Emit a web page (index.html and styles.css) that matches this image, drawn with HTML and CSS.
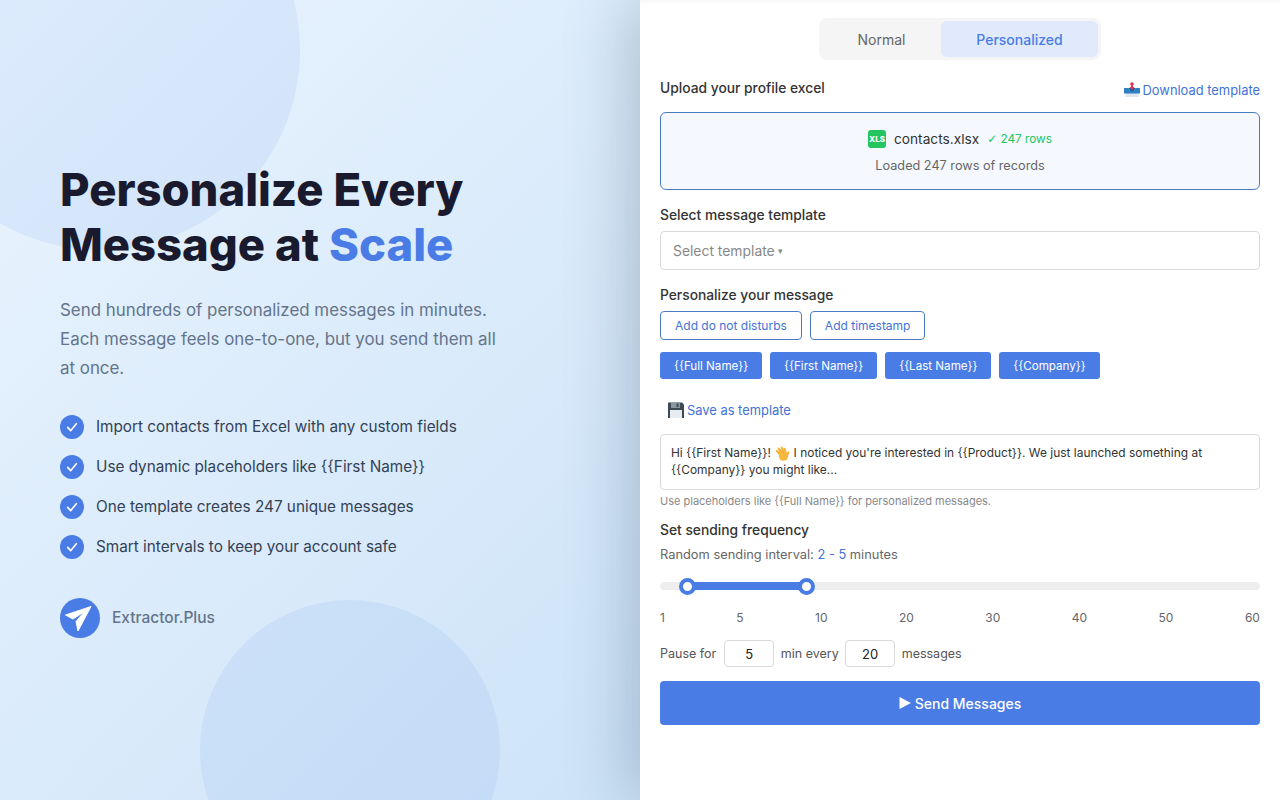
FILE: index.html
```html
<!DOCTYPE html>
<html lang="en">
<head>
<meta charset="utf-8">
<title>Extractor.Plus</title>
<link rel="stylesheet" href="styles.css">
</head>
<body>
<main class="layout">
  <section class="hero">
    <span class="blob blob-top"></span>
    <span class="blob blob-bottom"></span>
    <div class="hero-body">
      <h1 class="hero-title">Personalize Every<br>Message at <span class="accent">Scale</span></h1>
      <p class="hero-text">Send hundreds of personalized messages in minutes. Each message feels one-to-one, but you send them all at once.</p>
      <ul class="features">
        <li class="feature"><span class="tick"><svg viewBox="0 0 24 24" width="16" height="16"><path d="M5.500 12.500l4.500 5 8.500-10.500" fill="none" stroke="#fff" stroke-width="2.500" stroke-linecap="round" stroke-linejoin="round"/></svg></span>Import contacts from Excel with any custom fields</li>
        <li class="feature"><span class="tick"><svg viewBox="0 0 24 24" width="16" height="16"><path d="M5.500 12.500l4.500 5 8.500-10.500" fill="none" stroke="#fff" stroke-width="2.500" stroke-linecap="round" stroke-linejoin="round"/></svg></span>Use dynamic placeholders like {{First Name}}</li>
        <li class="feature"><span class="tick"><svg viewBox="0 0 24 24" width="16" height="16"><path d="M5.500 12.500l4.500 5 8.500-10.500" fill="none" stroke="#fff" stroke-width="2.500" stroke-linecap="round" stroke-linejoin="round"/></svg></span>One template creates 247 unique messages</li>
        <li class="feature"><span class="tick"><svg viewBox="0 0 24 24" width="16" height="16"><path d="M5.500 12.500l4.500 5 8.500-10.500" fill="none" stroke="#fff" stroke-width="2.500" stroke-linecap="round" stroke-linejoin="round"/></svg></span>Smart intervals to keep your account safe</li>
      </ul>
      <div class="brand">
        <span class="brand-logo"><svg viewBox="0 0 40 40" width="40" height="40"><path d="M5.500 17L31 8.500 18 33 16 23.500 24.500 13.500 13 21z" fill="#fff" stroke="#fff" stroke-width="1" stroke-linejoin="round"/></svg></span>
        <span class="brand-name">Extractor.Plus</span>
      </div>
    </div>
  </section>

  <section class="panel">
    <div class="tabs-row">
      <div class="tabs">
        <span class="tab">Normal</span>
        <span class="tab tab-active">Personalized</span>
      </div>
    </div>

    <div class="upload-head">
      <span class="label">Upload your profile excel</span>
      <a class="link download"><svg class="emoji" viewBox="0 0 16 16" width="16" height="16"><path d="M1.500 11h13v4H1.500z" fill="#dfe6ec"/><path d="M0 6h4.500l1.500 3h4l1.500-3H16v5.500H0z" fill="#2f7fc4"/><path d="M4.500 6h7L10 9H6z" fill="#1f5f9a"/><circle cx="8" cy="2" r="1.800" fill="#e0344a"/><path d="M7 2.500h2V5h1.500L8 8 5.500 5H7z" fill="#e0344a"/></svg>Download template</a>
    </div>
    <div class="dropzone">
      <div class="file-line">
        <span class="xls">XLS</span>
        <span class="file-name">contacts.xlsx</span>
        <span class="file-rows"><span class="file-check">✓</span> 247 rows</span>
      </div>
      <div class="file-note">Loaded 247 rows of records</div>
    </div>

    <div class="label label-template">Select message template</div>
    <div class="select">Select template<span class="caret">▾</span></div>

    <div class="label label-personal">Personalize your message</div>
    <div class="btn-row btn-row-outline">
      <span class="btn-outline">Add do not disturbs</span>
      <span class="btn-outline">Add timestamp</span>
    </div>
    <div class="btn-row btn-row-fill">
      <span class="chip">{{Full Name}}</span>
      <span class="chip">{{First Name}}</span>
      <span class="chip">{{Last Name}}</span>
      <span class="chip">{{Company}}</span>
    </div>
    <a class="link save"><svg class="emoji" viewBox="0 0 16 16" width="16" height="16"><path d="M0 .500h14l2 2V16H0z" fill="#3e4a53"/><rect x="3" y=".500" width="9" height="5.500" fill="#8a98a4"/><rect x="8.500" y="1.500" width="2" height="3.500" fill="#3e4a53"/><rect x="2" y="8" width="12" height="8" fill="#e6ecf0"/></svg>Save as template</a>
    <div class="message">Hi {{First Name}}! <svg class="wave" viewBox="0 0 16 16" width="16" height="16"><ellipse cx="9.500" cy="10" rx="4.700" ry="4.800" fill="#f5b83d"/><path d="M7 9L2.800 5M7.500 7.500L4.800 2.800M9.500 7L7.800 1.800M11.500 7.500L10.800 3M12.500 10L14.500 6.500" fill="none" stroke="#f5b83d" stroke-width="2.300" stroke-linecap="round"/><path d="M5 8.500L2.800 5.500M7.500 6.500L5.500 3M9.500 6.500L8.300 2.500" fill="none" stroke="#e59a26" stroke-width=".5" stroke-linecap="round"/></svg> I noticed you're interested in {{Product}}. We just launched something at {{Company}} you might like...</div>
    <div class="hint">Use placeholders like {{Full Name}} for personalized messages.</div>

    <div class="label label-frequency">Set sending frequency</div>
    <div class="interval">Random sending interval: <span class="interval-value">2 - 5</span> minutes</div>
    <div class="slider">
      <div class="slider-fill"></div>
      <span class="thumb thumb-a"></span>
      <span class="thumb thumb-b"></span>
    </div>
    <div class="scale"><span>1</span><span>5</span><span>10</span><span>20</span><span>30</span><span>40</span><span>50</span><span>60</span></div>
    <div class="pause">
      <span class="pause-first">Pause for</span><span class="num">5</span><span>min every</span><span class="num">20</span><span>messages</span>
    </div>
    <div class="send"><svg viewBox="0 0 12 12" width="12" height="12"><path d="M.5 0L12 6 .5 12z" fill="#fff"/></svg>Send Messages</div>
  </section>
</main>
</body>
</html>
```
FILE: styles.css
```css
* { box-sizing: border-box; }
html, body { margin: 0; height: 100%; }
body { font-family: Inter, "Noto Sans", sans-serif; color: #333; overflow: hidden; background: #fff; }
.layout { display: flex; width: 1280px; height: 800px; overflow: hidden; }

.hero { position: relative; width: 640px; height: 800px; overflow: hidden; background: linear-gradient(135deg, #eaf4fe 0%, #cde3f8 100%); display: flex; align-items: center; padding: 0 60px; }
.blob { position: absolute; border-radius: 50%; }
.blob-top { width: 400px; height: 400px; left: -100px; top: -150px; background: rgba(74,130,230,.09); }
.blob-bottom { width: 300px; height: 300px; left: 200px; top: 600px; background: rgba(74,130,230,.09); }
.hero-body { position: relative; width: 100%; margin-top: -1px; }
.hero-title { margin: 0 0 24px; font-size: 45.400px; line-height: 55px; font-weight: 800; color: #1a1a2e; }
.accent { color: #4a7ce6; }
.hero-text { margin: 0 0 32px; width: 450px; font-size: 16.900px; line-height: 29px; color: #64748b; }
.features { list-style: none; margin: 0 0 39px; padding: 0; display: flex; flex-direction: column; gap: 16px; }
.feature { display: flex; align-items: center; gap: 12px; height: 24px; font-size: 15.300px; color: #334155; }
.tick { width: 24px; height: 24px; border-radius: 50%; background: #4a7ce6; display: flex; align-items: center; justify-content: center; flex: none; }
.brand { display: flex; align-items: center; gap: 12px; }
.brand-logo { width: 40px; height: 40px; border-radius: 50%; background: #4a7ce6; display: block; }
.brand-logo svg { display: block; }
.brand-name { font-size: 15.500px; font-weight: 500; color: #64748b; }

.panel { position: relative; width: 640px; height: 800px; background: #fff; padding: 18px 20px 0; box-shadow: -10px 0 60px rgba(30,60,90,.26), inset 0 6px 6px -6px rgba(0,0,0,.08); }
.tabs-row { display: flex; justify-content: center; }
.tabs { display: flex; padding: 3px; border-radius: 8px; background: #f5f5f5; height: 42px; }
.tab { display: flex; align-items: center; justify-content: center; width: 119px; font-size: 14px; font-weight: 400; color: #666; border-radius: 6px; }
.tab-active { width: 157px; background: #e0eafc; color: #4a7ce6; font-weight: 500; }

.label { font-size: 13.800px; font-weight: 500; line-height: 20px; color: #333; }
.link { color: #3f73d6; font-size: 12.900px; display: flex; align-items: center; }
.upload-head { display: flex; justify-content: space-between; margin-top: 18px; height: 34px; }
.download { margin-top: 2px; height: 20px; }
.emoji { flex: none; margin-right: 3px; }
.dropzone { height: 78px; border: 1px solid #4a7cc6; border-radius: 6px; background: #f5f9ff; display: flex; flex-direction: column; align-items: center; padding-top: 16px; }
.file-line { display: flex; align-items: center; height: 20px; font-size: 13.700px; }
.xls { width: 18px; height: 18px; background: #22c55e; color: #fff; border-radius: 3px; font-size: 8px; font-weight: 800; display: flex; align-items: center; justify-content: center; margin-right: 8px; }
.file-name { color: #333; }
.file-rows { color: #22c55e; font-size: 11.800px; margin-left: 8px; }
.file-check { font-family: "DejaVu Sans", sans-serif; }
.file-note { margin-top: 7px; font-size: 12.700px; line-height: 20px; color: #666; }

.label-template { margin-top: 15px; }
.select { margin-top: 6px; height: 39px; border: 1px solid #d9d9d9; border-radius: 4px; padding: 0 12px; display: flex; align-items: center; font-size: 13.900px; color: #888; }
.caret { font-size: 9px; margin-left: 3px; }
.label-personal { margin-top: 15px; }
.btn-row { display: flex; gap: 8px; }
.btn-row-outline { margin-top: 6px; gap: 8px; }
.btn-outline { height: 29px; padding: 0 14px; display: flex; align-items: center; border: 1px solid #4a7cc6; border-radius: 4px; font-size: 12px; color: #3f73d6; background: #fff; }
.btn-row-fill { margin-top: 12px; }
.chip { height: 27px; padding: 0 14px; display: flex; align-items: center; border-radius: 3px; background: #4a7ce6; color: #fff; font-size: 11.620px; }
.save { margin: 21px 0 0 8px; height: 20px; }
.message { margin-top: 14px; height: 56px; padding: 9px 10px; border: 1px solid #d9d9d9; border-radius: 4px; font-size: 11.950px; line-height: 17px; color: #333; }
.wave { display: inline-block; height: 16px; margin: -2px 0; vertical-align: -3px; }
.hint { margin-top: 3px; font-size: 11px; line-height: 16px; color: #888; }
.label-frequency { margin-top: 11px; }
.interval { margin-top: 5px; font-size: 12.850px; line-height: 20px; color: #666; }
.interval-value { color: #3f73d6; }
.slider { position: relative; margin-top: 17px; height: 8px; border-radius: 4px; background: #eee; }
.slider-fill { position: absolute; left: 27px; width: 120px; top: 0; height: 8px; background: #4a7ce6; }
.thumb { position: absolute; top: -4.500px; width: 17px; height: 17px; border-radius: 50%; background: #fff; border: 4px solid #4a7ce6; }
.thumb-a { left: 18.500px; }
.thumb-b { left: 138px; }
.scale { display: flex; justify-content: space-between; margin-top: 20px; font-size: 12px; line-height: 16px; color: #666; }
.pause { display: flex; align-items: center; margin-top: 14px; height: 27px; font-size: 12.500px; color: #555; gap: 6.500px; }
.pause-first { margin-right: 1.500px; }
.num { width: 50px; height: 27px; border: 1px solid #d9d9d9; border-radius: 4px; display: flex; align-items: center; justify-content: center; color: #222; font-size: 13px; }
.send { margin-top: 14px; height: 44px; border-radius: 4px; background: #4a7ce6; color: #fff; font-size: 14px; font-weight: 500; display: flex; align-items: center; justify-content: center; gap: 4px; }
```
